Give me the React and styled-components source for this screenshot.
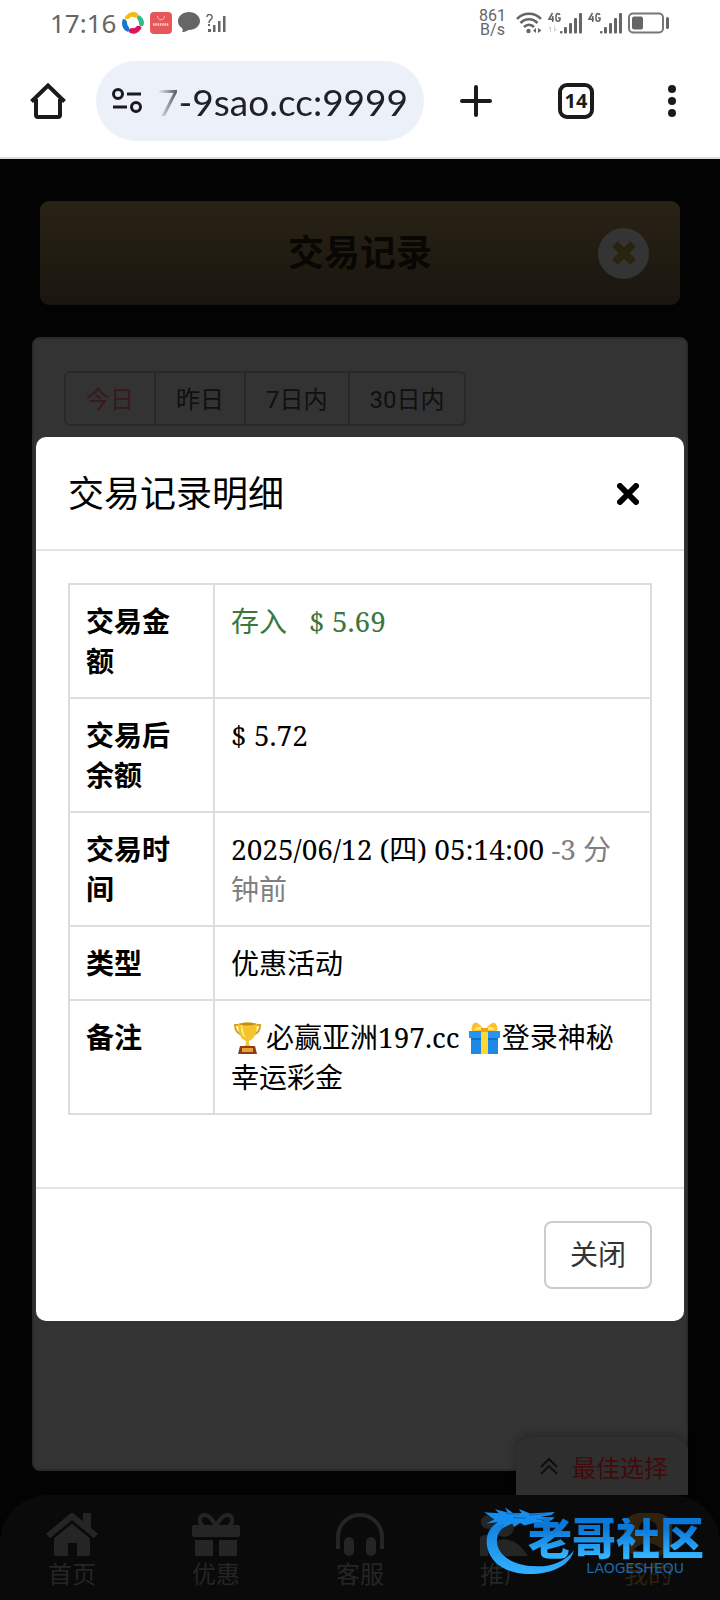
import React, { useState } from 'react';
import styled, { createGlobalStyle } from 'styled-components';

const records = [
	{ id: 'amount', label: '交易金额' },
	{ id: 'balance', label: '交易后余额' },
	{ id: 'time', label: '交易时间' },
	{ id: 'type', label: '类型' },
	{ id: 'note', label: '备注' },
];

const ranges = ['今日', '昨日', '7日内', '30日内'];

const Signal = ({ faint }) => (
	<svg width="34" height="22" viewBox="0 0 34 22">
		{faint && (
			<g fill="#cfcfcf">
				<path d="M3 14l-3 3h2v3h1zM6 20l3-3H7v-3H6z" />
			</g>
		)}
		<g fill="none" stroke="#666" strokeWidth="1.600">
			<path d="M4.500 1L1 7.200h5M4.700 4v6" />
			<path d="M12 3c-1-2-4-2-4 1v3c0 3 4 3 4 0V6h-2" />
		</g>
		<g fill="#666">
			<rect x="12" y="19" width="2.500" height="2.500" rx="1" />
			<rect x="16" y="15" width="3" height="6.500" rx="1" />
			<rect x="21" y="11" width="3" height="10.500" rx="1" />
			<rect x="26" y="6" width="3" height="15.500" rx="1" />
			<rect x="31" y="1" width="3" height="20.500" rx="1" />
		</g>
	</svg>
);

const StatusIcons = () => (
	<>
		<svg width="22" height="22" viewBox="0 0 22 22">
			<path d="M3 5C7-1 14-1 16 2c1 3-2 4-5 3C8 4 7 8 5 7 3 7 2 6 3 5z" fill="#f5b914" />
			<path d="M17 3c5 3 6 8 4 11-3 1-4-1-4-3 0-3-3-4-2-6z" fill="#35b98a" />
			<path d="M19 17c-3 5-9 6-12 3-1-3 1-4 4-4 3 1 3-3 6-2 2 0 3 1 2 3z" fill="#d8145c" />
			<path d="M1 7c3 0 4 2 4 4 0 3 3 4 2 7 0 2-1 2-3 1-4-3-5-8-3-12z" fill="#1b75cf" />
		</svg>
		<svg width="22" height="22" viewBox="0 0 22 22">
			<rect width="22" height="22" rx="4" fill="#e55759" />
			<path d="M7.500 4c0 5 7 5 7 0" fill="none" stroke="#ffb9b5" />
			<path
				d="M3 12.500h16"
				stroke="#fbd3d1"
				strokeWidth="2.500"
				strokeDasharray="1.500 .8"
			/>
		</svg>
		<svg width="22" height="21" viewBox="0 0 22 21">
			<path
				d="M11 0c6 0 11 4 11 9s-5 9-11 9c-2 0-2 2-7 2 1-1 1-2 0-4-3-2-4-4-4-7 0-5 5-9 11-9z"
				fill="#666"
			/>
		</svg>
		<svg width="21" height="18" viewBox="0 0 21 18">
			<path
				d="M1 3c0-4 6-3 5 1-1 2-3 2-3 5"
				fill="none"
				stroke="#666"
				strokeWidth="1.500"
			/>
			<g fill="#666">
				<rect x="2" y="10" width="2" height="2" />
				<rect x="2" y="15" width="3" height="3" />
				<rect x="7" y="11" width="2.500" height="7" />
				<rect x="12" y="7" width="2.500" height="11" />
				<rect x="17" y="2" width="2.500" height="16" />
			</g>
		</svg>
	</>
);

const Wifi = () => (
	<svg width="26" height="22" viewBox="0 0 26 22">
		<g fill="none" stroke="#666" strokeWidth="2.600">
			<path d="M1 7c6-7 18-7 24 0" />
			<path d="M4.500 11c5-5 12-5 17 0" />
			<path d="M8 15c3-3 7-3 10 0" />
		</g>
		<circle cx="12.500" cy="19" r="2.200" fill="#666" />
		<path d="M20 16v5l-3-2.500zM22 16v5l3.500-2.500z" fill="#666" />
	</svg>
);

const Battery = () => (
	<svg width="42" height="22" viewBox="0 0 42 22">
		<rect
			x="1"
			y="1.500"
			width="34"
			height="19"
			rx="4"
			fill="none"
			stroke="#777"
			strokeWidth="2"
		/>
		<rect x="4" y="4.500" width="11" height="13" rx="2" fill="#666" />
		<rect x="38" y="5" width="3" height="12" rx="1.500" fill="#666" />
	</svg>
);

const HomeOutline = () => (
	<svg width="36" height="36" viewBox="0 0 36 36">
		<path
			d="M1.500 18.500L18 2.500l16.500 16M6 16v16q0 2 2 2h20q2 0 2-2V16"
			fill="none"
			stroke="#1b1b1b"
			strokeWidth="4"
		/>
	</svg>
);

const SiteSettings = () => (
	<svg width="30" height="26" viewBox="0 0 30 26">
		<g fill="none" stroke="#1b1b1f" strokeWidth="3">
			<circle cx="6" cy="6" r="4.500" />
			<path d="M15 6h14M1 19h14" />
			<circle cx="24" cy="19" r="4.500" />
		</g>
	</svg>
);

const Trophy = () => (
	<EmojiSvg viewBox="0 0 35 32" role="img" aria-label="奖杯">
		<g fill="none" stroke="#d8a21c" strokeWidth="2">
			<path d="M9 3H4c0 6 3 9 8 10M24 3h5c0 6-3 9-8 10" />
		</g>
		<path
			d="M7 2c6-2 13-2 19 0 0 10-3 15-8 17-.5 3 1 5 3 6h-9c2-1 3.500-3 3-6C10 17 7 12 7 2z"
			fill="#f3c52a"
		/>
		<path d="M11 3c1 7 2 10 4 13-4-2-5-7-5-13z" fill="#fff0a0" />
		<path d="M7 2q9.500 3 19 0-9.500-3-19 0z" fill="#c98b12" />
		<path d="M9 24h15l2 8H7z" fill="#8c3d17" />
		<path d="M11 26h11v4H11z" fill="#eda02f" />
	</EmojiSvg>
);

const Gift = () => (
	<EmojiSvg viewBox="0 0 35 32" role="img" aria-label="礼物">
		<path d="M4 14h27v18H4z" fill="#1e88e5" />
		<path d="M2 9h31v7H2z" fill="#2196f3" />
		<path d="M4 16h27v2H4z" fill="#1670c4" />
		<path
			d="M17 8C14 3 9-1 7 1 5 3 4 6 5 9h25c1-3 0-6-2-8-3-1-7 3-10 7z"
			fill="#fbc02d"
		/>
		<path d="M15 6c-3-2-6-2-8 2h8zM20 6c3-2 6-2 8 2h-8z" fill="#ffe36e" />
		<path d="M14 8h7v24h-7z" fill="#fdd835" />
		<path d="M14 6h7v4h-7z" fill="#e9a51b" />
	</EmojiSvg>
);

const navItems = [
	{
		label: '首页',
		icon: (
			<svg width="54" height="43" viewBox="0 0 54 43">
				<path d="M27 10l18 15v16q0 2-2 2H32V30h-9v13H11q-2 0-2-2V25z" fill="currentColor" />
				<path
					d="M3 24L27 4l24 20"
					fill="none"
					stroke="#0a0a0a"
					strokeWidth="10"
				/>
				<path d="M38 0h8v17l-8-7z" fill="currentColor" />
				<path
					d="M3 23L27 3l24 20"
					fill="none"
					stroke="currentColor"
					strokeWidth="6"
				/>
			</svg>
		),
	},
	{
		label: '优惠',
		icon: (
			<svg width="48" height="43" viewBox="0 0 48 43">
				<path
					d="M24 13C20 6 17 2 13 2 7 2 6 10 11 12.500M24 13c4-7 7-11 11-11 6 0 7 8 2 10.500"
					fill="none"
					stroke="currentColor"
					strokeWidth="4"
				/>
				<rect y="12" width="48" height="12" rx="2" fill="currentColor" />
				<path d="M3 27h18v16H5q-2 0-2-2zM27 27h18v14q0 2-2 2H27z" fill="currentColor" />
			</svg>
		),
	},
	{
		label: '客服',
		icon: (
			<svg width="48" height="43" viewBox="0 0 48 43">
				<path
					d="M2 36V24a22 22 0 0 1 44 0v12"
					fill="none"
					stroke="currentColor"
					strokeWidth="4"
				/>
				<rect x="8" y="24" width="10" height="19" rx="5" fill="currentColor" />
				<rect x="30" y="24" width="10" height="19" rx="5" fill="currentColor" />
			</svg>
		),
	},
	{
		label: '推广',
		icon: (
			<svg width="48" height="43" viewBox="0 0 48 43">
				<circle cx="8" cy="9" r="7" fill="currentColor" />
				<circle cx="24" cy="14" r="10" fill="currentColor" />
				<path d="M0 43V24q8-5 14 0-6 6-6 19zM11 43q0-16 13-17 14 1 24 17z" fill="currentColor" />
			</svg>
		),
	},
	{
		label: '我的',
		active: true,
		icon: (
			<svg width="48" height="43" viewBox="0 0 48 43">
				<path
					fillRule="evenodd"
					d="M24 0a24 22 0 1 1 0 43 24 22 0 1 1 0-43zm0 7a9 9 0 1 0 .1 18A9 9 0 0 0 24 7zM10 36q14 8 28 0-14-12-28 0z"
					fill="currentColor"
				/>
			</svg>
		),
	},
];

const Watermark = () => (
	<Mark>
		<svg width="93" height="72" viewBox="60 40 280 215">
			<defs>
				<linearGradient id="mark-blue" x1="0" y1="0" x2="0" y2="1">
					<stop offset="0" stopColor="#0b78d8" />
					<stop offset="1" stopColor="#32b2ff" />
				</linearGradient>
			</defs>
			<path
				d="M150 76C95 88 62 120 73 171c12 52 66 80 127 79 65 0 122-25 134-72-30 38-76 52-123 48-60-3-107-31-109-74-1-28 18-48 56-60z"
				fill="url(#mark-blue)"
			/>
			<path
				d="M64 64l44 3-12-12 38 10-8-16 24 17h26l-8-12 34 14 74-5-10 9-34 6 44 1-10 10-30-2 18 10-12 7-28-8-30 8-12-8-18 12-6-10-30 14 8-14-36 10 16-15-36 5 24-12z"
				fill="#168ef0"
			/>
			<path
				d="M198 73l50-5M150 80l40 2M130 68l40 2M220 84l30 4"
				stroke="#075299"
				strokeWidth="2"
			/>
		</svg>
		<MarkText>
			<strong>老哥社区</strong>
			<span>LAOGESHEQU</span>
		</MarkText>
	</Mark>
);

const RecordValue = ({ id }) => {
	if (id === 'amount') {
		return (
			<Deposit>
				存入<span>$ 5.69</span>
			</Deposit>
		);
	}
	if (id === 'balance') return '$ 5.72';
	if (id === 'time') {
		return (
			<>
				2025/06/12 (四) 05:14:00 <Muted>-3 分钟前</Muted>
			</>
		);
	}
	if (id === 'type') return '优惠活动';
	return (
		<>
			<Trophy />
			必赢亚洲197.cc <Gift />
			登录神秘幸运彩金
		</>
	);
};

const App = () => {
	const [range, setRange] = useState('今日');
	const [url, setUrl] = useState('7-9sao.cc:9999');
	const [open, setOpen] = useState(true);

	return (
		<Screen>
			<GlobalStyle />
			<StatusBar>
				<Clock>17:16</Clock>
				<StatusIcons />
				<Speed>
					861
					<br />
					B/s
				</Speed>
				<Wifi />
				<Signal faint />
				<Signal />
				<Battery />
			</StatusBar>
			<Toolbar>
				<ToolButton aria-label="主页">
					<HomeOutline />
				</ToolButton>
				<AddressBar>
					<SiteSettings />
					<input
						aria-label="网址"
						value={url}
						onChange={(e) => setUrl(e.target.value)}
					/>
				</AddressBar>
				<ToolButton aria-label="新标签页">
					<svg width="32" height="32" viewBox="0 0 32 32">
						<path
							d="M16 2v28M2 16h28"
							stroke="#1b1b1b"
							strokeWidth="4"
							strokeLinecap="round"
						/>
					</svg>
				</ToolButton>
				<ToolButton aria-label="标签页">
					<TabCount>14</TabCount>
				</ToolButton>
				<ToolButton aria-label="更多">
					<svg width="8" height="32" viewBox="0 0 8 32" fill="#1b1b1b">
						<circle cx="4" cy="4" r="4" />
						<circle cx="4" cy="16" r="4" />
						<circle cx="4" cy="28" r="4" />
					</svg>
				</ToolButton>
			</Toolbar>

			<Page>
				<TitleBar>
					<h1>交易记录</h1>
					<RoundClose aria-label="返回">
						<svg width="26" height="26" viewBox="0 0 26 26">
							<path
								d="M4 4l18 18M22 4L4 22"
								stroke="#29240f"
								strokeWidth="8"
							/>
						</svg>
					</RoundClose>
				</TitleBar>
				<Panel>
					<Ranges>
						{ranges.map((item) => (
							<RangeButton
								key={item}
								$active={item === range}
								onClick={() => setRange(item)}
							>
								{item}
							</RangeButton>
						))}
					</Ranges>
				</Panel>
				<BottomArea>
					<BestChoice>
						<svg width="18" height="17" viewBox="0 0 18 17">
							<path
								d="M1 9l8-8 8 8M1 16l8-8 8 8"
								fill="none"
								stroke="#0f0f0f"
								strokeWidth="2"
							/>
						</svg>
						最佳选择
					</BestChoice>
					<Nav>
						{navItems.map(({ label, icon, active }) => (
							<NavLink key={label} href="#" $active={active}>
								{icon}
								<span>{label}</span>
							</NavLink>
						))}
					</Nav>
					<Watermark />
				</BottomArea>

				{open && (
					<Backdrop>
						<Modal role="dialog" aria-labelledby="detail-title">
							<ModalHeader>
								<h2 id="detail-title">交易记录明细</h2>
								<CloseButton aria-label="关闭" onClick={() => setOpen(false)}>
									<svg width="22" height="22" viewBox="0 0 22 22">
										<path
											d="M3 3l16 16M19 3L3 19"
											stroke="#000"
											strokeWidth="6"
											strokeLinecap="round"
										/>
									</svg>
								</CloseButton>
							</ModalHeader>
							<ModalBody>
								<DetailTable>
									<tbody>
										{records.map(({ id, label }) => (
											<tr key={id}>
												<th scope="row">{label}</th>
												<td>
													<RecordValue id={id} />
												</td>
											</tr>
										))}
									</tbody>
								</DetailTable>
							</ModalBody>
							<ModalFooter>
								<FooterButton onClick={() => setOpen(false)}>关闭</FooterButton>
							</ModalFooter>
						</Modal>
					</Backdrop>
				)}
			</Page>
		</Screen>
	);
};

const GlobalStyle = createGlobalStyle`
	* {
		box-sizing: border-box;
	}
	body {
		margin: 0;
		background: #030303;
		font-family: Roboto, 'Noto Sans CJK SC', sans-serif;
	}
	h1, h2 {
		margin: 0;
		font-family: 'Noto Serif', 'Noto Sans CJK SC', sans-serif;
	}
	button, input {
		font-family: inherit;
		border: none;
		padding: 0;
		background: none;
	}
	svg {
		flex: none;
	}
`;

const Screen = styled.div`
	min-height: 100vh;
	display: flex;
	flex-direction: column;
`;

const StatusBar = styled.div`
	height: 61px;
	padding: 0 50px 16px;
	background: #fff;
	color: #666;
	display: flex;
	align-items: center;
	gap: 6px;
`;

const Clock = styled.span`
	font-family: 'Noto Sans', sans-serif;
	font-size: 26px;
	line-height: 32px;
`;

const Speed = styled.span`
	margin-left: auto;
	margin-right: 4px;
	font-size: 16px;
	line-height: 14px;
	text-align: center;
`;

const Toolbar = styled.header`
	display: grid;
	grid-template-columns: 96px minmax(0, 1fr) 104px 96px 96px;
	padding-bottom: 16px;
	background: #fff;
	border-bottom: 2px solid #dcdcdc;
`;

const ToolButton = styled.button`
	display: flex;
	align-items: center;
	justify-content: center;
`;

const AddressBar = styled.label`
	height: 80px;
	padding: 0 16px;
	border-radius: 40px;
	background: #ecf0f9;
	display: flex;
	align-items: center;
	gap: 12px;

	input {
		flex: 1;
		min-width: 0;
		font-family: Lato, sans-serif;
		font-size: 37px;
		color: #1f2126;
		text-align: right;
		outline: none;
		mask-image: linear-gradient(to right, transparent 4px, #000 30px);
	}
`;

const TabCount = styled.span`
	width: 36px;
	height: 36px;
	border: 4px solid #1b1b1b;
	border-radius: 9px;
	font-family: 'Noto Sans', sans-serif;
	font-size: 20px;
	font-weight: 700;
	line-height: 28px;
	color: #1b1b1b;
`;

const Page = styled.main`
	position: relative;
	flex: 1;
	display: flex;
	flex-direction: column;
	padding-top: 42px;
`;

const TitleBar = styled.div`
	display: grid;
	grid-template-columns: 1fr auto 1fr;
	align-items: center;
	height: 104px;
	margin: 0 40px 32px;
	padding: 0 31px;
	border-radius: 9px;
	background: linear-gradient(#2a2116, #201c11 55%, #1a150f);

	h1 {
		grid-column: 2;
		font-size: 36px;
		line-height: 40px;
		color: #080704;
	}
`;

const RoundClose = styled.button`
	justify-self: end;
	display: flex;
	align-items: center;
	justify-content: center;
	width: 51px;
	height: 51px;
	border-radius: 50%;
	background: #343434;
`;

const Panel = styled.section`
	flex: 1;
	margin: 0 32px 24px;
	padding: 32px 30px;
	border: 2px solid #2b2b2b;
	border-radius: 8px;
	background: #333;
`;

const Ranges = styled.div`
	display: flex;
`;

const RangeButton = styled.button`
	height: 55px;
	padding: 0 20px 2px;
	border: 2px solid #292929;
	margin-left: -2px;
	font-size: 24px;
	color: ${({ $active }) => ($active ? '#371919' : '#101010')};

	&:first-child {
		margin-left: 0;
		border-radius: 6px 0 0 6px;
	}
	&:last-child {
		border-radius: 0 6px 6px 0;
	}
`;

const BottomArea = styled.div`
	position: relative;
`;

const BestChoice = styled.button`
	position: absolute;
	right: 32px;
	bottom: 100%;
	display: flex;
	align-items: center;
	gap: 14px;
	height: 58px;
	padding: 0 20px 0 24px;
	border-radius: 16px 16px 0 0;
	background: #2f2f2f;
	box-shadow: 0 -2px 10px rgba(0, 0, 0, 0.3);
	font-size: 24px;
	color: #420a0a;
`;

const Nav = styled.nav`
	display: grid;
	grid-template-columns: repeat(5, 1fr);
	height: 105px;
	padding-top: 18px;
	border-radius: 48px 48px 0 0;
	background: #0a0a0a;
`;

const NavLink = styled.a`
	display: flex;
	flex-direction: column;
	align-items: center;
	gap: 4px;
	font-size: 24px;
	line-height: 30px;
	text-decoration: none;
	color: ${({ $active }) => ($active ? '#30220e' : '#252525')};
`;

/* floats over the bottom navigation */
const Mark = styled.div`
	position: absolute;
	right: 16px;
	bottom: 24px;
	display: flex;
	align-items: flex-start;
	pointer-events: none;
`;

const MarkText = styled.div`
	display: flex;
	flex-direction: column;
	align-items: flex-end;
	margin-left: -48px;
	padding-top: 14px;

	strong {
		font-size: 44px;
		font-weight: 900;
		line-height: 44px;
		background: linear-gradient(#0b78d8 25%, #32b2ff 85%);
		background-clip: text;
		color: transparent;
	}
	span {
		padding-right: 20px;
		font-family: 'DejaVu Sans', sans-serif;
		font-size: 14px;
		line-height: 12px;
		color: #1769ad;
	}
`;

const Backdrop = styled.div`
	position: absolute;
	inset: 0;
	padding: 278px 36px 0;
`;

const Modal = styled.section`
	border-radius: 10px;
	background: #fff;
	color: #000;
`;

const ModalHeader = styled.div`
	display: flex;
	align-items: center;
	justify-content: space-between;
	height: 114px;
	padding: 2px 32px 0;
	border-bottom: 2px solid #e4e4e4;

	h2 {
		font-size: 36px;
		font-weight: 400;
		line-height: 48px;
	}
`;

const CloseButton = styled.button`
	display: flex;
	align-items: center;
	justify-content: center;
	width: 48px;
	height: 48px;
`;

const ModalBody = styled.div`
	padding: 32px 32px 72px;
	border-bottom: 2px solid #e4e4e4;
`;

const DetailTable = styled.table`
	width: 100%;
	border-collapse: collapse;
	table-layout: fixed;
	font-family: 'Noto Serif', 'Noto Sans CJK SC', sans-serif;
	font-size: 28px;
	line-height: 40px;

	th,
	td {
		padding: 16px;
		border: 2px solid #ddd;
		text-align: left;
		vertical-align: top;
	}
	th {
		width: 145px;
		padding-right: 20px;
	}
`;

const Deposit = styled.span`
	color: #3c763d;

	span {
		margin-left: 22px;
	}
`;

const Muted = styled.span`
	color: #808080;
`;

const EmojiSvg = styled.svg`
	width: 35px;
	height: 32px;
	vertical-align: -6px;
`;

const ModalFooter = styled.div`
	display: flex;
	justify-content: flex-end;
	padding: 32px;
`;

const FooterButton = styled.button`
	height: 68px;
	padding: 0 24px 4px;
	border: 2px solid #ccc;
	border-radius: 8px;
	background: #fff;
	font-size: 28px;
	color: #333;
`;

export default App;
